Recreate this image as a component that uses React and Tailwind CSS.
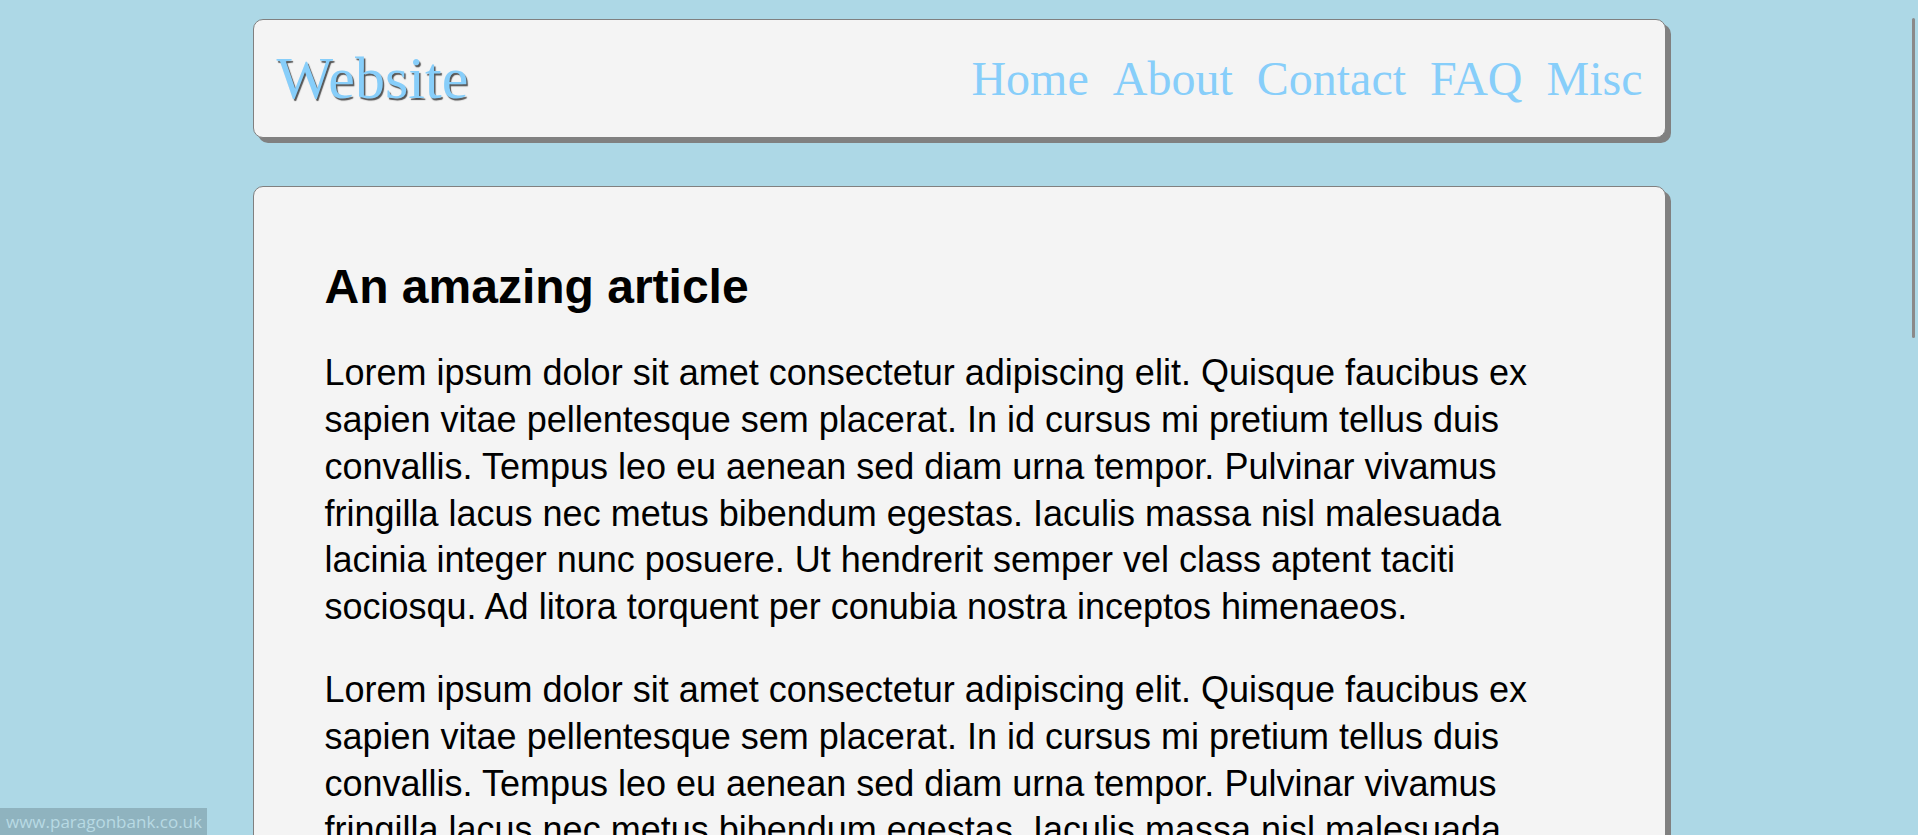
import React from "react";

const para =
  "Lorem ipsum dolor sit amet consectetur adipiscing elit. Quisque faucibus ex sapien vitae pellentesque sem placerat. In id cursus mi pretium tellus duis convallis. Tempus leo eu aenean sed diam urna tempor. Pulvinar vivamus fringilla lacus nec metus bibendum egestas. Iaculis massa nisl malesuada lacinia integer nunc posuere. Ut hendrerit semper vel class aptent taciti sociosqu. Ad litora torquent per conubia nostra inceptos himenaeos.";

export default function App() {
  const links = ["Home", "About", "Contact", "FAQ", "Misc"];
  return (
    <div className="relative h-[835px] w-full overflow-hidden bg-[#add8e6]">
      <div className="mx-auto w-[1413px] pt-[19px]">
        <header className="flex h-[119px] items-center justify-between rounded-[10px] border border-[#808080] bg-[#f4f4f4] pl-[23px] pr-[22px] shadow-[5px_5px_0_#808080]">
          <div className="font-['Liberation_Serif','Times_New_Roman',serif] text-[60px] font-normal leading-[1.15] text-[#87cefa] [text-shadow:1.5px_1.5px_1px_#555]">
            Website
          </div>
          <nav className="flex gap-[24px] font-['Liberation_Serif','Times_New_Roman',serif] text-[48px] leading-[1.15] text-[#87cefa]">
            {links.map((l) => (
              <a key={l} href="#" className="no-underline">
                {l}
              </a>
            ))}
          </nav>
        </header>

        <main className="mt-[48px] rounded-[10px] border border-[#808080] bg-[#f4f4f4] pl-[71px] pr-[69px] pt-[72px] pb-[72px] font-['Liberation_Sans',Arial,sans-serif] text-black shadow-[5px_5px_0_#808080]">
          <h1 className="text-[48px] font-bold leading-[1.15]">An amazing article</h1>
          <p className="mt-[36px] text-[36px] leading-[1.3]">{para}</p>
          <p className="mt-[36px] text-[36px] leading-[1.3]">{para}</p>
          <p className="mt-[36px] text-[36px] leading-[1.3]">{para}</p>
        </main>
      </div>

      <div className="absolute right-[3px] top-[18px] h-[320px] w-[3px] rounded-full bg-[#8a8a8a]" />

      <div className="absolute bottom-0 left-0 flex h-[27px] w-[207px] items-center bg-[rgba(0,0,0,0.17)] pl-[6px] font-['Open_Sans',sans-serif] text-[17px] leading-none text-[#b8dae4]">
        www.paragonbank.co.uk
      </div>
    </div>
  );
}
